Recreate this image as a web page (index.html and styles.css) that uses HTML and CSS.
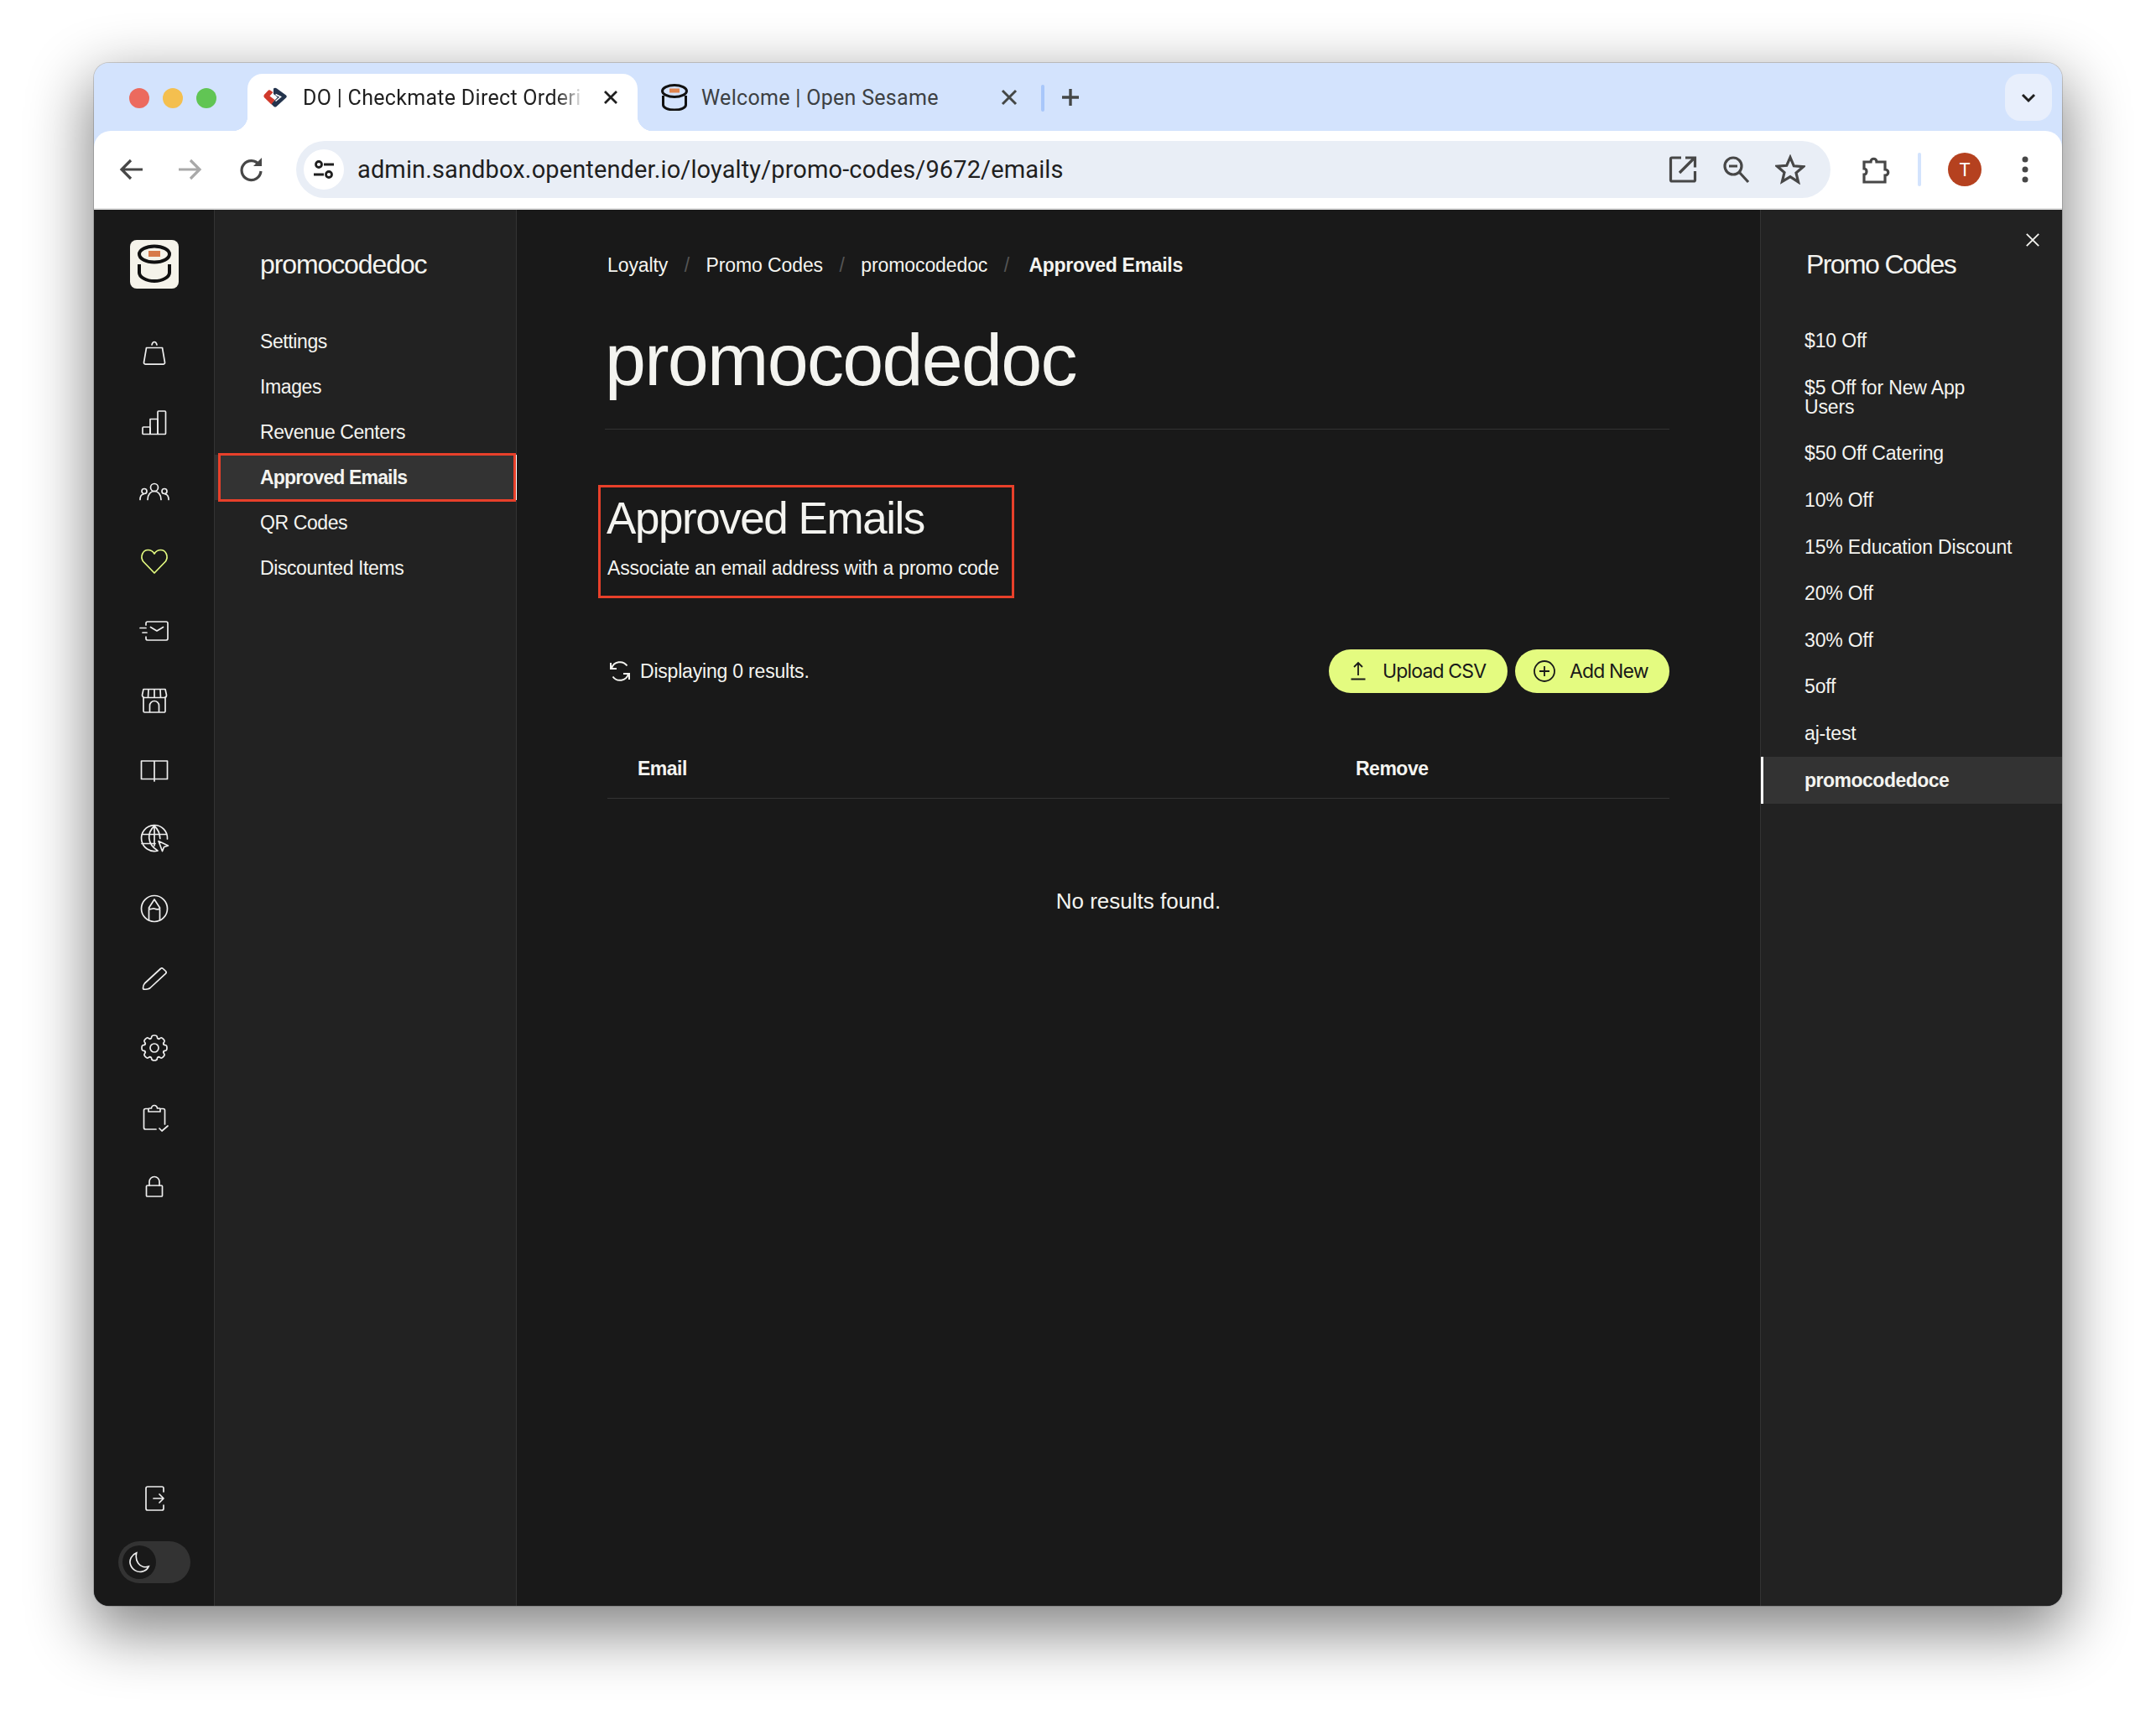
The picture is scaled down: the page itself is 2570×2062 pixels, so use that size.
FILE: index.html
```html
<!DOCTYPE html>
<html lang="en">
<head>
<meta charset="utf-8">
<title>Approved Emails</title>
<link rel="stylesheet" href="styles.css">
</head>
<body>
<svg class="defs" width="0" height="0" aria-hidden="true">
  <defs>
    <path id="tooth" d="M-4.6 -11.1C-3.5 -10.8-3.6-12-3.2-13.6Q-2.8-15 0-15Q2.8-15 3.2-13.6C3.6-12 3.5-10.8 4.6-11.1"/>
  </defs>
</svg>
<div class="window">
  <div class="tabstrip">
    <div class="lights"><span class="light red"></span><span class="light yellow"></span><span class="light green"></span></div>
    <div class="tab active">
      <svg class="favicon" viewBox="0 0 28 24"><path d="M12 1.500Q14 0 16 1.500L27 9.500Q28.500 11 27 12.500L15.500 23Q14 24 12.500 23L9 19.500 17 12 12 8z" fill="#24344d"/><path d="M.8 9L6 3.500Q7 3 8 3.500L11.500 6 7.500 10.500 13.500 15 9.500 20.500.8 12Q0 10.500.8 9z" fill="#d0392b"/><path d="M14.500 8.500l6 3-6 5" fill="none" stroke="#fff" stroke-width="1.600"/></svg>
      <span class="tab-title fade">DO | Checkmate Direct Orderi</span>
      <svg class="tab-close" viewBox="0 0 24 24"><path d="M5 5l14 14M19 5L5 19"/></svg>
    </div>
    <div class="tab second">
      <svg class="favicon logo-ic" viewBox="0 0 32 32"><ellipse cx="16" cy="8.500" rx="14.500" ry="7" fill="none" stroke="#111" stroke-width="3"/><rect x="10" y="5.500" width="12" height="5" fill="#e0854f"/><path d="M2.500 14v11c0 3.500 6 6 13.500 6s13.500-2.500 13.500-6V14" fill="none" stroke="#111" stroke-width="3"/></svg>
      <span class="tab-title">Welcome | Open Sesame</span>
      <svg class="tab-close grey" viewBox="0 0 24 24"><path d="M4 4l16 16M20 4L4 20"/></svg>
    </div>
    <span class="tab-sep"></span>
    <svg class="newtab" viewBox="0 0 24 24"><path d="M12 2v20M2 12h20"/></svg>
    <div class="tab-search"><svg viewBox="0 0 24 24"><path d="M5 9l7 7 7-7"/></svg></div>
  </div>
  <div class="toolbar">
    <svg class="chrome-ic" viewBox="0 0 36 36"><path d="M31 18H7M17 7L6 18l11 11"/></svg>
    <svg class="chrome-ic dim" viewBox="0 0 36 36"><path d="M5 18h24M19 7l11 11-11 11"/></svg>
    <svg class="chrome-ic" viewBox="0 0 36 36"><path d="M27 12.500A11.500 11.500 0 1 0 29 20"/><path class="solid" d="M20 14h10V4z"/></svg>
    <div class="urlbar">
      <div class="site-info"><svg viewBox="0 0 28 28"><circle cx="8" cy="8" r="3.500"/><path d="M14 8h12M2 20h12"/><circle cx="20" cy="20" r="3.500"/></svg></div>
      <span class="url">admin.sandbox.opentender.io/loyalty/promo-codes/9672/emails</span>
      <div class="url-actions">
        <svg class="chrome-ic" viewBox="0 0 36 36"><path d="M16 4H5a1.500 1.500 0 0 0-1.500 1.500v25A1.500 1.500 0 0 0 5 32h26a1.500 1.500 0 0 0 1.500-1.500V20M14 22L31 5M21 4h11.500v11.500"/></svg>
        <svg class="chrome-ic" viewBox="0 0 36 36"><circle cx="14" cy="14" r="10"/><path d="M9 14h10M21 21l11 12"/></svg>
        <svg class="chrome-ic" viewBox="0 0 36 36"><path d="M18 3.500l4.300 10.300 11.200.9-8.500 7.300 2.600 10.900L18 26.600l-9.600 5.800L11 21.500l-8.500-7.300 11.200-.9z"/></svg>
      </div>
    </div>
    <svg class="chrome-ic ext" viewBox="0 0 36 36"><path d="M5 9h8c0-5 7-5 7 0h10v9c5 0 5 7 0 7v8H5v-9c4 0 4-7 0-7z"/></svg>
    <span class="tool-sep"></span>
    <span class="avatar">T</span>
    <svg class="dots" viewBox="0 0 36 36"><circle cx="18" cy="6" r="3.500"/><circle cx="18" cy="18" r="3.500"/><circle cx="18" cy="30" r="3.500"/></svg>
  </div>
  <div class="app">
    <nav class="rail">
      <div class="logo"><svg viewBox="0 0 58 58"><ellipse cx="29" cy="17" rx="18" ry="9.500" fill="none" stroke="#111" stroke-width="4"/><rect x="22" y="13" width="14" height="7" fill="#d77a4a"/><path d="M11 29v10c0 5 8 10 18 10s18-5 18-10V29" fill="none" stroke="#111" stroke-width="4"/></svg></div>
      <div class="rail-list">
        <div class="rail-item"><svg viewBox="0 0 36 36"><path d="M8.500 11.500h19l3 17.500a2 2 0 0 1-2 2.200h-21a2 2 0 0 1-2-2.200z"/><path d="M15 8c.5-2 1.500-3.500 3-3.500s2.500 1.500 3 3.500"/></svg></div>
        <div class="rail-item"><svg viewBox="0 0 36 36"><rect x="4" y="23" width="9" height="8.500" rx="1"/><rect x="13" y="13.500" width="9" height="18"/><rect x="22" y="4" width="9.500" height="27.500" rx="1"/></svg></div>
        <div class="rail-item"><svg viewBox="0 0 36 36"><circle cx="18" cy="13" r="4.500"/><path d="M10 27.500c0-6 3.500-10 8-10s8 4 8 10"/><circle cx="6" cy="17.500" r="3"/><path d="M1 27.500c0-3.500 1.500-6 4-6.500"/><circle cx="30" cy="17.500" r="3"/><path d="M35 27.500c0-3.500-1.500-6-4-6.500"/></svg></div>
        <div class="rail-item lime"><svg viewBox="0 0 36 36"><path d="M18 32L4.500 18C1 12.500 4 4.500 10.500 4.500c3.500 0 6 2 7.500 4.500 1.500-2.500 4-4.500 7.500-4.500C32 4.500 35 12.500 31.500 18z"/></svg></div>
        <div class="rail-item"><svg viewBox="0 0 36 36"><path d="M8 11V9a2 2 0 0 1 2-2h22a2 2 0 0 1 2 2v18a2 2 0 0 1-2 2H10a2 2 0 0 1-2-2v-2"/><path d="M13.500 13.500L21 18l7.500-4.500M1 14.500h7M4 20h5"/></svg></div>
        <div class="rail-item"><svg viewBox="0 0 36 36"><path d="M5 4.500h26l1.500 7a3 3 0 0 1-3 3H6.500a3 3 0 0 1-3-3zM11 4.500l-.5 10M18 4.500v10M25 4.500l.5 10M5 14.500v16a1.500 1.500 0 0 0 1.500 1.500h23a1.500 1.500 0 0 0 1.500-1.500v-16M12.500 32v-8a5.500 5.500 0 0 1 11 0v8"/></svg></div>
        <div class="rail-item"><svg viewBox="0 0 36 36"><path d="M2.500 7h15.500v21.500H2.500zM18 7h15.500v21.500H18zM18 7v24"/></svg></div>
        <div class="rail-item"><svg viewBox="0 0 36 36"><path d="M22 32A15.500 15.500 0 1 1 33.500 18M18 2.500c-9 8-9 21 4 29.500M18 2.500c4.500 4 6.500 9 6.800 15M3 12.500h30M3 23.500h16M18 2.500V26"/><path d="M23 20.500l11.500 5.500-5 1.500-2 5z"/></svg></div>
        <div class="rail-item"><svg viewBox="0 0 36 36"><circle cx="18" cy="18" r="15.500"/><path d="M11.500 31.500V17l6.500-10 6.500 10v14.500M11.500 18c2.500 2 4-1 6.500 0s4 1.500 6.500 0"/></svg></div>
        <div class="rail-item"><svg viewBox="0 0 36 36"><path d="M6.500 24L25.500 6.500a2 2 0 0 1 2.800 0l3.200 3a2 2 0 0 1 0 2.800L13 29.500c-1.500 1.200-5.500 2-7.500 1.700-.7-.1-1-.6-1-1.200 0-2 .8-4.700 2-6z"/></svg></div>
        <div class="rail-item"><svg viewBox="-18 -18 36 36"><use href="#tooth"/><use href="#tooth" transform="rotate(45)"/><use href="#tooth" transform="rotate(90)"/><use href="#tooth" transform="rotate(135)"/><use href="#tooth" transform="rotate(180)"/><use href="#tooth" transform="rotate(225)"/><use href="#tooth" transform="rotate(270)"/><use href="#tooth" transform="rotate(315)"/><circle r="5"/></svg></div>
        <div class="rail-item"><svg viewBox="0 0 36 36"><path d="M11 7.500H7.500a2 2 0 0 0-2 2V30a2 2 0 0 0 2 2H20M25 7.500h3.500a2 2 0 0 1 2 2V26M11 11V8a1 1 0 0 1 1-1h2.500a3.500 3.500 0 0 1 7 0H24a1 1 0 0 1 1 1v3zM24 31l3 3 7-6"/></svg></div>
        <div class="rail-item"><svg viewBox="0 0 36 36"><rect x="8.500" y="17" width="19" height="13" rx="1"/><path d="M12 17v-4.500a6 6 0 0 1 12 0V17"/></svg></div>
      </div>
      <div class="rail-bottom">
        <div class="rail-item"><svg viewBox="0 0 36 36"><path d="M29 10V6a2 2 0 0 0-2-2H10a2 2 0 0 0-2 2v24a2 2 0 0 0 2 2h17a2 2 0 0 0 2-2v-4M17 18h12M24 13l5 5-5 5"/></svg></div>
        <div class="toggle"><span class="knob"><svg viewBox="0 0 28 28"><path d="M10.500 2C4 4.500 1 11 2.500 16.500 4.500 24 12 27.500 18 26c3.500-.8 6.500-3 8-6.500-5 1.500-10.500 0-13.500-4.500C10 11.500 9.500 6.500 10.500 2z"/></svg></span></div>
      </div>
    </nav>
    <aside class="subnav">
      <h3 class="subnav-title">promocodedoc</h3>
      <ul class="subnav-list">
        <li>Settings</li>
        <li>Images</li>
        <li>Revenue Centers</li>
        <li class="current marked">Approved Emails</li>
        <li>QR Codes</li>
        <li>Discounted Items</li>
      </ul>
    </aside>
    <main class="main">
      <div class="crumbs">
        <span>Loyalty</span><i>/</i><span>Promo Codes</span><i>/</i><span>promocodedoc</span><i>/</i><b>Approved Emails</b>
      </div>
      <h1 class="page-title">promocodedoc</h1>
      <header class="section-head">
        <h2>Approved Emails</h2>
        <p>Associate an email address with a promo code</p>
      </header>
      <div class="actions">
        <div class="status">
          <svg viewBox="0 0 26 26"><path d="M3 9.500A10.500 10.500 0 0 1 21.500 6.500M23 16.500A10.500 10.500 0 0 1 4.500 19.500M2 3v7h7M24 23v-7h-7"/></svg>
          <span>Displaying 0 results.</span>
        </div>
        <div class="buttons">
          <button class="btn upload"><svg viewBox="0 0 24 24"><path d="M12 2v15M7 7l5-5 5 5M3.500 21.500h17"/></svg>Upload CSV</button>
          <button class="btn add"><svg viewBox="0 0 26 26"><circle cx="13" cy="13" r="12"/><path d="M13 7v12M7 13h12"/></svg>Add New</button>
        </div>
      </div>
      <div class="thead"><span>Email</span><span>Remove</span></div>
      <p class="empty">No results found.</p>
    </main>
    <aside class="panel">
      <svg class="panel-close" viewBox="0 0 20 20"><path d="M2 2l16 16M18 2L2 18"/></svg>
      <h3 class="panel-title">Promo Codes</h3>
      <ul class="panel-list">
        <li>$10 Off</li>
        <li>$5 Off for New App<br>Users</li>
        <li>$50 Off Catering</li>
        <li>10% Off</li>
        <li>15% Education Discount</li>
        <li>20% Off</li>
        <li>30% Off</li>
        <li>5off</li>
        <li>aj-test</li>
        <li class="current">promocodedoce</li>
      </ul>
    </aside>
  </div>
</div>
</body>
</html>
```
FILE: styles.css
```css
* { box-sizing: border-box; }
html, body { margin: 0; height: 100%; overflow: hidden; }
body {
  background: #fff;
  padding: 75px 112px 0;
  font-family: "Liberation Sans", Arial, sans-serif;
  color: #f4f4f0;
}
.defs { display: block; height: 0; }
.window {
  width: 2346px;
  height: 1839px;
  border-radius: 18px;
  display: flex;
  flex-direction: column;
  box-shadow: 0 26px 72px 6px rgba(0,0,0,.48), 0 0 0 1px rgba(0,0,0,.16);
  overflow: hidden;
  background: #d3e3fd;
}
/* tab strip */
.tabstrip {
  height: 81px;
  flex: none;
  background: #d3e3fd;
  display: flex;
  font-family: Roboto, sans-serif;
  color: #3c4043;
}
.lights { display: flex; gap: 16px; padding: 30px 0 0 42px; align-self: flex-start; }
.light { width: 24px; height: 24px; border-radius: 50%; }
.red { background: #ec6a5e; }
.yellow { background: #f4bf4f; }
.green { background: #61c554; }
.tab {
  position: relative;
  margin-top: 13px;
  height: 68px;
  display: flex;
  align-items: center;
  padding-bottom: 12px;
  font-size: 25px;
}
.tab.active {
  margin-left: 37px;
  width: 465px;
  padding-left: 19px;
  background: #fff;
  border-radius: 18px 18px 0 0;
  color: #1f1f1f;
}
.tab.active::before, .tab.active::after {
  content: "";
  position: absolute;
  bottom: 0;
  width: 18px;
  height: 18px;
}
.tab.active::before { left: -18px; background: radial-gradient(circle at 0 0, transparent 18px, #fff 18.500px); }
.tab.active::after { right: -18px; background: radial-gradient(circle at 100% 0, transparent 18px, #fff 18.500px); }
.favicon { width: 28px; height: 24px; flex: none; }
.favicon.logo-ic { width: 32px; height: 32px; }
.tab.active .tab-title { width: 336px; margin-left: 19px; margin-right: 19px; }
.tab-title { white-space: nowrap; letter-spacing: .3px; }
.fade { -webkit-mask-image: linear-gradient(90deg, #000 90%, transparent 100%); mask-image: linear-gradient(90deg, #000 90%, transparent 100%); }
.tab-close { width: 24px; height: 24px; flex: none; fill: none; stroke: #1f1f1f; stroke-width: 2.800; }
.tab-close.grey { stroke: #444746; stroke-width: 3; }
.tab.second { padding-left: 28px; }
.tab.second .tab-title { width: 355px; margin-left: 16px; }
.tab-sep { width: 4px; height: 32px; margin: 26px 0 0 26px; background: #a8c7fa; border-radius: 2px; }
.newtab { width: 24px; height: 24px; margin: 29px 0 0 19px; fill: none; stroke: #444746; stroke-width: 3.400; }
.tab-search {
  margin: 13px 12px 0 auto;
  width: 56px;
  height: 56px;
  border-radius: 18px;
  background: #e8effc;
  display: flex;
  align-items: center;
  justify-content: center;
}
.tab-search svg { width: 24px; height: 24px; fill: none; stroke: #1f1f1f; stroke-width: 3; }
/* toolbar */
.toolbar {
  height: 94px;
  flex: none;
  padding: 0 0 0 27px;
  background: #fff;
  border-radius: 20px 20px 0 0;
  border-bottom: 2px solid #e0e0e0;
  display: flex;
  align-items: center;
}
.chrome-ic { width: 36px; height: 36px; flex: none; fill: none; stroke: #474747; stroke-width: 3.200; }
.chrome-ic.dim { stroke: #a9a9a9; margin-left: 33px; }
.chrome-ic:nth-child(3) { margin-left: 38px; }
.chrome-ic .solid { fill: #474747; stroke: none; }
.urlbar {
  margin-left: 35px;
  width: 1829px;
  height: 68px;
  flex: none;
  background: #e9eef6;
  border-radius: 34px;
  display: flex;
  align-items: center;
  padding: 0 30px 0 9px;
}
.site-info {
  width: 48px;
  height: 48px;
  border-radius: 50%;
  background: #fff;
  display: flex;
  align-items: center;
  justify-content: center;
}
.site-info svg { width: 28px; height: 28px; fill: none; stroke: #1f1f1f; stroke-width: 2.800; }
.url { margin-left: 16px; font-family: Roboto, sans-serif; font-size: 29px; letter-spacing: .12px; color: #1f1f1f; }
.url-actions { margin-left: auto; display: flex; gap: 28px; }
.url-actions .chrome-ic { margin: 0; }
.chrome-ic.ext { margin-left: 35px; }
.tool-sep { width: 4px; height: 40px; margin-left: 33px; background: #d3e3fd; border-radius: 2px; }
.avatar {
  margin-left: 32px;
  width: 40px;
  height: 40px;
  border-radius: 50%;
  background: #b5411f;
  color: #fff;
  display: flex;
  align-items: center;
  justify-content: center;
  font: 22px Roboto, sans-serif;
}
.dots { width: 36px; height: 36px; margin-left: 34px; fill: #474747; }
/* app */
.app { flex: 1; display: flex; min-height: 0; background: #191919; }
.rail {
  width: 144px;
  flex: none;
  background: #191919;
  border-right: 1px solid #333;
  display: flex;
  flex-direction: column;
  align-items: center;
  padding: 36px 0 27px;
}
.logo { width: 58px; height: 58px; flex: none; background: #f5f3ea; border-radius: 8px; }
.logo svg { display: block; width: 58px; height: 58px; }
.rail-list { margin-top: 35.500px; display: flex; flex-direction: column; }
.rail-item { height: 82.800px; display: flex; align-items: center; justify-content: center; }
.rail-item svg { width: 36px; height: 36px; fill: none; stroke: #eee; stroke-width: 1.700; stroke-linejoin: round; stroke-linecap: round; overflow: visible; }
.rail-item.lime svg { stroke: #e4fb80; }
.rail-bottom { margin-top: auto; display: flex; flex-direction: column; align-items: center; }
.rail-bottom .rail-item { height: 36px; }
.toggle {
  margin-top: 33px;
  width: 86px;
  height: 50px;
  padding: 5px;
  border-radius: 25px;
  background: #333;
}
.knob {
  width: 40px;
  height: 40px;
  border-radius: 50%;
  background: #191919;
  display: flex;
  align-items: center;
  justify-content: center;
}
.knob svg { width: 26px; height: 26px; fill: none; stroke: #eee; stroke-width: 1.800; }
.subnav {
  width: 360px;
  flex: none;
  background: #222;
  border-right: 1px solid #333;
}
.subnav-title, .panel-title {
  margin: 45px 0 0;
  font-size: 32px;
  line-height: 40px;
  font-weight: 400;
}
.subnav-title { letter-spacing: -1.100px; padding-left: 54px; }
.panel-title { letter-spacing: -1.600px; padding-left: 55px; margin-left: -1px; }
.subnav-list, .panel-list { list-style: none; margin: 0; padding: 0; font-size: 23px; }
.subnav-list { margin-top: 44.500px; letter-spacing: -.4px; }
.subnav-list li { position: relative; height: 54px; line-height: 54px; padding-left: 54px; margin-right: -1px; }
.subnav-list li.current { background: #333; font-weight: 700; border-right: 2px solid #fff; letter-spacing: -.85px; }
.marked::after {
  content: "";
  position: absolute;
  left: 4px;
  right: -1px;
  top: -2px;
  bottom: -2px;
  border: 3px solid #e8402a;
}
.main { flex: 1; min-width: 0; padding: 50px 108px 0 108px; }
.crumbs { height: 32px; display: flex; align-items: center; font-size: 23px; letter-spacing: -.1px; }
.crumbs i { font-style: normal; color: #555; margin: 0 19.500px; }
.crumbs b { font-weight: 700; letter-spacing: -.3px; margin-left: 4px; }
.page-title {
  margin: 47px 0 0 -3px;
  padding-bottom: 32px;
  border-bottom: 1px solid #333;
  font-size: 88px;
  line-height: 100px;
  font-weight: 400;
  letter-spacing: -1.700px;
}
.section-head {
  margin: 66px 0 0 -11px;
  width: 496px;
  height: 135px;
  border: 3px solid #e8402a;
  padding: 9px 0 0 8px;
}
.section-head h2 { margin: 0 0 0 -1px; font-size: 53px; line-height: 56px; font-weight: 400; letter-spacing: -1.450px; white-space: nowrap; }
.section-head p { margin: 15px 0 0; font-size: 23px; line-height: 32px; letter-spacing: -.2px; white-space: nowrap; }
.actions { margin-top: 61px; height: 52px; display: flex; justify-content: space-between; align-items: center; }
.status { display: flex; align-items: center; gap: 11px; font-size: 23px; letter-spacing: -.2px; padding-left: 2px; }
.status svg { width: 26px; height: 26px; fill: none; stroke: #f4f4f0; stroke-width: 2; }
.buttons { display: flex; gap: 9px; }
.btn {
  height: 52px;
  border: 0;
  border-radius: 26px;
  background: #e4fb80;
  color: #191919;
  font-family: Inter, sans-serif;
  font-size: 23px;
  font-weight: 400;
  letter-spacing: -.85px;
  display: flex;
  align-items: center;
  white-space: nowrap;
}
.btn svg { fill: none; stroke: #191919; stroke-width: 1.800; flex: none; }
.btn.upload { width: 213px; padding-left: 23px; gap: 17px; }
.btn.upload svg { width: 24px; height: 24px; }
.btn.add { width: 184px; padding-left: 22px; gap: 17px; }
.btn.add svg { width: 26px; height: 26px; }
.thead {
  margin-top: 55px;
  height: 71px;
  padding-left: 36px;
  display: grid;
  grid-template-columns: 856px 1fr;
  align-items: center;
  border-bottom: 1px solid #333;
  font-size: 23px;
  font-weight: 700;
  letter-spacing: -.5px;
}
.empty { margin: 104px 0 0; text-align: center; font-size: 26px; line-height: 36px; }
.panel {
  position: relative;
  width: 360px;
  flex: none;
  background: #222;
  border-left: 1px solid #333;
}
.panel-close {
  position: absolute;
  right: 26px;
  top: 27px;
  width: 18px;
  height: 18px;
  fill: none;
  stroke: #f4f4f0;
  stroke-width: 2;
}
.panel-list { margin-top: 44px; letter-spacing: -.15px; }
.panel-list li { padding: 16.300px 30px 16.300px 49px; line-height: 23px; border-left: 3px solid transparent; }
.panel-list li.current { background: #333; border-left-color: #fff; font-weight: 700; letter-spacing: -.5px; }
```
